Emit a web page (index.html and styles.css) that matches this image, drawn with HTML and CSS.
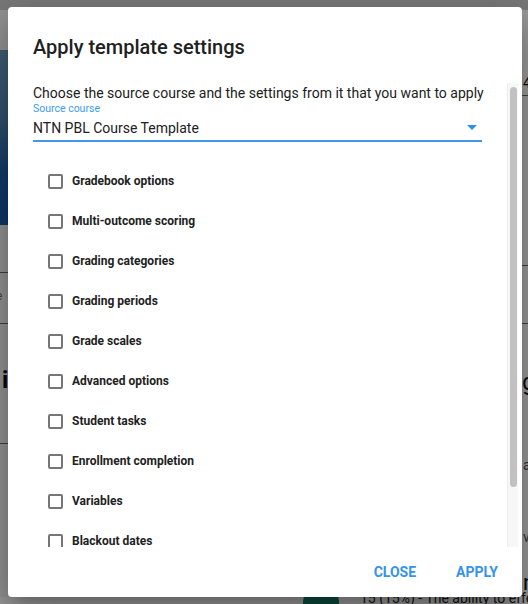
FILE: index.html
```html
<!DOCTYPE html>
<html lang="en">
<head>
<meta charset="utf-8">
<title>Apply template settings</title>
<link rel="stylesheet" href="styles.css">
</head>
<body>
<div class="page">
  <div class="page-top"></div>
  <div class="page-body">
    <div class="left-col">
      <div class="hero"></div>
      <div class="rule r1"></div>
      <div class="frag f-e">e</div>
      <div class="rule r2"></div>
      <div class="frag f-i">i</div>
      <div class="rule r3"></div>
    </div>
    <div class="right-col">
      <div class="frag f-4">4</div>
      <div class="rule r4"></div>
      <div class="rule r5"></div>
      <div class="rule r6"></div>
      <div class="frag f-g">g</div>
      <div class="frag f-a">a</div>
      <div class="frag f-v">v</div>
      <div class="frag f-n">n</div>
    </div>
  </div>
  <div class="page-bottom">
    <span class="chip"></span>
    <span class="crit">15 (15%) - The ability to effe</span>
  </div>
</div>
<div class="overlay"></div>

<div class="dialog" role="dialog" aria-labelledby="dlg-title">
  <h2 class="dialog-title" id="dlg-title">Apply template settings</h2>
  <div class="dialog-body">
    <div class="dialog-content">
      <p class="intro">Choose the source course and the settings from it that you want to apply</p>
      <div class="select-field">
        <label class="select-label">Source course</label>
        <div class="select-value">
          <span>NTN PBL Course Template</span>
          <svg class="select-arrow" width="10" height="5" viewBox="0 0 10 5"><path d="M0 0 L10 0 L5 5 Z" fill="#2f8fe8"/></svg>
        </div>
      </div>
      <ul class="options">
        <li class="option"><span class="box"></span><span class="opt-label">Gradebook options</span></li>
        <li class="option"><span class="box"></span><span class="opt-label">Multi-outcome scoring</span></li>
        <li class="option"><span class="box"></span><span class="opt-label">Grading categories</span></li>
        <li class="option"><span class="box"></span><span class="opt-label">Grading periods</span></li>
        <li class="option"><span class="box"></span><span class="opt-label">Grade scales</span></li>
        <li class="option"><span class="box"></span><span class="opt-label">Advanced options</span></li>
        <li class="option"><span class="box"></span><span class="opt-label">Student tasks</span></li>
        <li class="option"><span class="box"></span><span class="opt-label">Enrollment completion</span></li>
        <li class="option"><span class="box"></span><span class="opt-label">Variables</span></li>
        <li class="option"><span class="box"></span><span class="opt-label">Blackout dates</span></li>
      </ul>
    </div>
    <div class="scrollbar"><div class="thumb"></div></div>
  </div>
  <div class="dialog-actions">
    <button class="btn" type="button">Close</button>
    <button class="btn" type="button">Apply</button>
  </div>
</div>
</body>
</html>
```
FILE: styles.css
```css
* { box-sizing: border-box; }
html, body { margin: 0; padding: 0; }
body {
  width: 528px;
  height: 604px;
  overflow: hidden;
  font-family: Roboto, "Liberation Sans", Arial, sans-serif;
  background: #fff;
  position: relative;
}

/* ---------- backdrop page ---------- */
.page { width: 528px; height: 604px; display: flex; flex-direction: column; overflow: hidden; }
.page-top { height: 10px; background: #c8c8c8; }
.page-body { flex: 1; display: flex; justify-content: space-between; position: relative; }
.left-col, .right-col { width: 8px; position: relative; overflow: hidden; }
.right-col { width: 6px; }
.left-col { background: #f4f4f4; }
.hero {
  position: absolute; left: 0; top: 40px; width: 8px; height: 175px;
  background: linear-gradient(180deg, #6a9ec2 0%, #4f86b6 40%, #1f63b0 70%, #1c5aa8 100%);
}
.rule { position: absolute; left: 0; width: 8px; height: 1px; background: #6a6a6a; }
.r1 { top: 262px; }
.r2 { top: 313px; }
.r3 { top: 433px; }
.r4 { top: 85px; }
.r5 { top: 255px; }
.r6 { top: 313px; }
.frag { position: absolute; font-size: 22px; color: #111; line-height: 1; }
.f-e { top: 280px; left: -4px; font-size: 12px; color: #777; }
.f-i { top: 358px; left: 2px; font-weight: 700; font-size: 24px; }
.f-4 { top: 66px; left: 1px; font-size: 14px; }
.f-g { top: 360px; left: 0; font-size: 24px; }
.f-a { top: 448px; left: 1px; font-size: 14px; color: #555; }
.f-v { top: 520px; left: 1px; font-size: 14px; color: #555; }
.f-n { top: 562px; left: 1px; font-size: 22px; }
.page-bottom { height: 7px; position: relative; }
.chip {
  position: absolute; left: 303px; top: -6px; width: 36px; height: 20px;
  background: #1a7f68; border-radius: 10px 10px 0 0;
}
.crit {
  position: absolute; left: 360px; top: -6px; font-size: 14px; line-height: 14px; color: #222; white-space: nowrap;
}

.overlay {
  position: absolute; inset: 0;
  background: rgba(0, 0, 0, 0.4);
}

/* ---------- dialog ---------- */
.dialog {
  position: absolute;
  left: 8px; top: 7px;
  width: 514px; height: 590px;
  background: #fff;
  border-radius: 4px;
  box-shadow: 0 11px 15px -7px rgba(0,0,0,.2), 0 24px 38px 3px rgba(0,0,0,.14), 0 9px 46px 8px rgba(0,0,0,.12);
  display: flex;
  flex-direction: column;
}
.dialog-title {
  margin: 0;
  padding: 24px 24px 20px 25px;
  font-size: 20px;
  line-height: 32px;
  font-weight: 500;
  color: #212121;
}
.dialog-body {
  flex: 1;
  min-height: 0;
  display: flex;
  padding-right: 4px;
}
.dialog-content {
  flex: 1;
  min-width: 0;
  overflow: hidden;
  padding: 0 25px 0 25px;
}
.scrollbar {
  width: 11px;
  flex: none;
  background: #f7f7f7;
  border-left: 1px solid #ececec;
  padding: 4px 1px 0 2px;
}
.thumb {
  height: 400px;
  background: #c1c1c1;
  border-radius: 4px;
}
.intro {
  margin: 0;
  font-size: 14px;
  line-height: 20px;
  color: #212121;
  white-space: nowrap;
}
.select-field { display: flex; flex-direction: column; }
.select-label {
  font-size: 10.5px;
  line-height: 12px;
  color: #3c9bf0;
}
.select-value {
  margin-top: 3px;
  padding-bottom: 2px;
  border-bottom: 2px solid #3f97ec;
  display: flex;
  align-items: center;
  justify-content: space-between;
  font-size: 14px;
  line-height: 20px;
  color: #212121;
}
.select-arrow { margin-right: 5px; margin-top: -2px; }
.options { list-style: none; margin: 19px 0 0; padding: 0; }
.option {
  height: 40px;
  display: flex;
  align-items: center;
  padding-left: 15px;
  gap: 9px;
}
.box {
  width: 15px; height: 15px;
  border: 2px solid #767676;
  border-radius: 2px;
  flex: none;
}
.opt-label {
  font-size: 12px;
  font-weight: 700;
  color: #222;
}
.dialog-actions {
  height: 50px;
  display: flex;
  justify-content: flex-end;
  align-items: center;
  gap: 8px;
  padding-right: 8px;
}
.btn {
  border: 0;
  background: none;
  font-family: inherit;
  font-size: 14px;
  font-weight: 700;
  text-transform: uppercase;
  color: #3593ea;
  padding: 0 16px;
  height: 36px;
  cursor: pointer;
}
```
